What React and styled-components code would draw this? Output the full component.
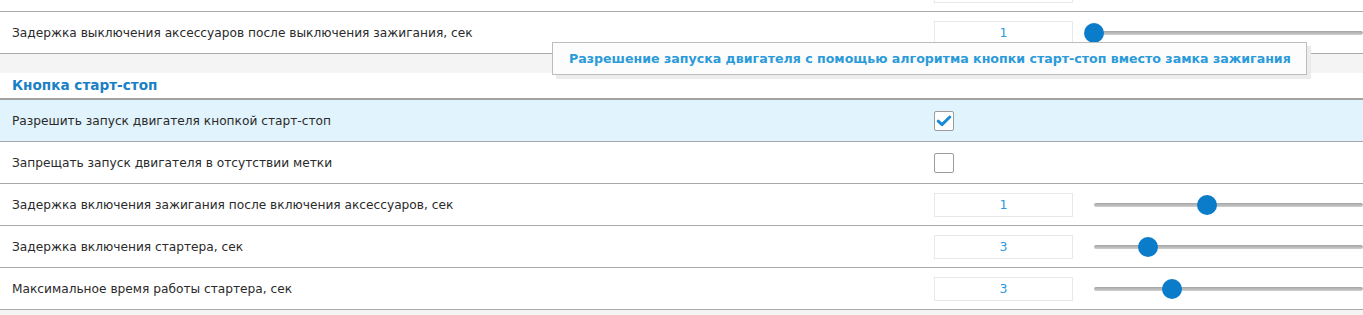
import React from "react";
import styled, { createGlobalStyle } from "styled-components";

const GlobalStyle = createGlobalStyle`
  html, body { margin: 0; padding: 0; background: #ffffff; }
  body { font-family: "DejaVu Sans", Verdana, sans-serif; }
  * { box-sizing: border-box; }
`;

const Page = styled.div`
  position: relative;
  width: 1363px;
  height: 315px;
  overflow: hidden;
  background: #f4f4f4;
`;

const Section = styled.div`
  display: flex;
  flex-direction: column;
  margin-top: ${(p) => p.$offset || 0}px;
`;

const SectionHeader = styled.div`
  height: 27px;
  display: flex;
  align-items: center;
  padding: 0 0 1px 12px;
  background: #ffffff;
  border-bottom: 2px solid #a2a2a2;
  color: #1a80c6;
  font-weight: bold;
  font-size: 13.6px;
`;

const Row = styled.div`
  display: grid;
  grid-template-columns: 922px 1fr;
  align-items: center;
  height: 42px;
  padding-left: 12px;
  border-bottom: 1px solid #a8a8a8;
  background: ${(p) => (p.$active ? "#e1f3fc" : "#ffffff")};
`;

const Label = styled.div`
  font-size: 12.2px;
  color: #2a2a2a;
  white-space: nowrap;
`;

const Control = styled.div`
  display: flex;
  align-items: center;
  gap: 21px;
`;

const NumberBox = styled.div`
  width: 139px;
  height: 24px;
  border: 1px solid #e8e8e8;
  background: #ffffff;
  display: flex;
  align-items: center;
  justify-content: center;
  color: #2a9be0;
  font-size: 12.5px;
`;

const Slider = styled.div`
  position: relative;
  flex: 1;
  height: 20px;
  display: flex;
  align-items: center;
`;

const Track = styled.div`
  width: 100%;
  height: 4px;
  background: linear-gradient(#a4a4a4, #cfcfcf);
  border-radius: 2px;
`;

const Thumb = styled.div`
  position: absolute;
  top: 0;
  left: ${(p) => p.$offset - 10}px;
  width: 20px;
  height: 20px;
  border-radius: 50%;
  background: #0a7cc9;
`;

const Box = styled.div`
  width: 20px;
  height: 20px;
  border: 1px solid #9c9c9c;
  border-radius: 2px;
  background: #ffffff;
  display: flex;
  align-items: center;
  justify-content: center;
`;

const Tooltip = styled.div`
  position: absolute;
  left: 552px;
  top: 42px;
  width: 755px;
  height: 33px;
  display: flex;
  align-items: center;
  padding-left: 16px;
  background: #fcfcfc;
  border: 1px solid #bdbdbd;
  box-shadow: 4px 4px 0 #ececec;
  color: #2b9ad9;
  font-weight: bold;
  font-size: 12.6px;
  white-space: nowrap;
`;

const Check = ({ checked }) => (
  <Box>
    {checked && (
      <svg width="16" height="14" viewBox="0 0 16 14">
        <path
          d="M2.2 7.2 L6 10.6 L13.8 3"
          fill="none"
          stroke="#1b8bd5"
          strokeWidth="3"
          strokeLinecap="round"
          strokeLinejoin="round"
        />
      </svg>
    )}
  </Box>
);

const NumberSlider = ({ value, offset }) => (
  <Control>
    <NumberBox>{value}</NumberBox>
    <Slider>
      <Track />
      <Thumb $offset={offset} />
    </Slider>
  </Control>
);

const startStop = [
  { label: "Разрешить запуск двигателя кнопкой старт-стоп", type: "check", checked: true },
  { label: "Запрещать запуск двигателя в отсутствии метки", type: "check", checked: false },
  { label: "Задержка включения зажигания после включения аксессуаров, сек", type: "num", value: 1, offset: 113 },
  { label: "Задержка включения стартера, сек", type: "num", value: 3, offset: 54 },
  { label: "Максимальное время работы стартера, сек", type: "num", value: 3, offset: 78 },
];

export default function App() {
  return (
    <>
      <GlobalStyle />
      <Page>
        <Section $offset={-30}>
          <Row>
            <Label />
            <Control>
              <NumberBox />
            </Control>
          </Row>
          <Row>
            <Label>Задержка выключения аксессуаров после выключения зажигания, сек</Label>
            <NumberSlider value={1} offset={0} />
          </Row>
        </Section>
        <Section $offset={19}>
          <SectionHeader>Кнопка старт-стоп</SectionHeader>
          {startStop.map((r) => (
            <Row key={r.label} $active={r.checked}>
              <Label>{r.label}</Label>
              {r.type === "check" ? (
                <Control>
                  <Check checked={r.checked} />
                </Control>
              ) : (
                <NumberSlider value={r.value} offset={r.offset} />
              )}
            </Row>
          ))}
        </Section>
        <Tooltip>Разрешение запуска двигателя с помощью алгоритма кнопки старт-стоп вместо замка зажигания</Tooltip>
      </Page>
    </>
  );
}
